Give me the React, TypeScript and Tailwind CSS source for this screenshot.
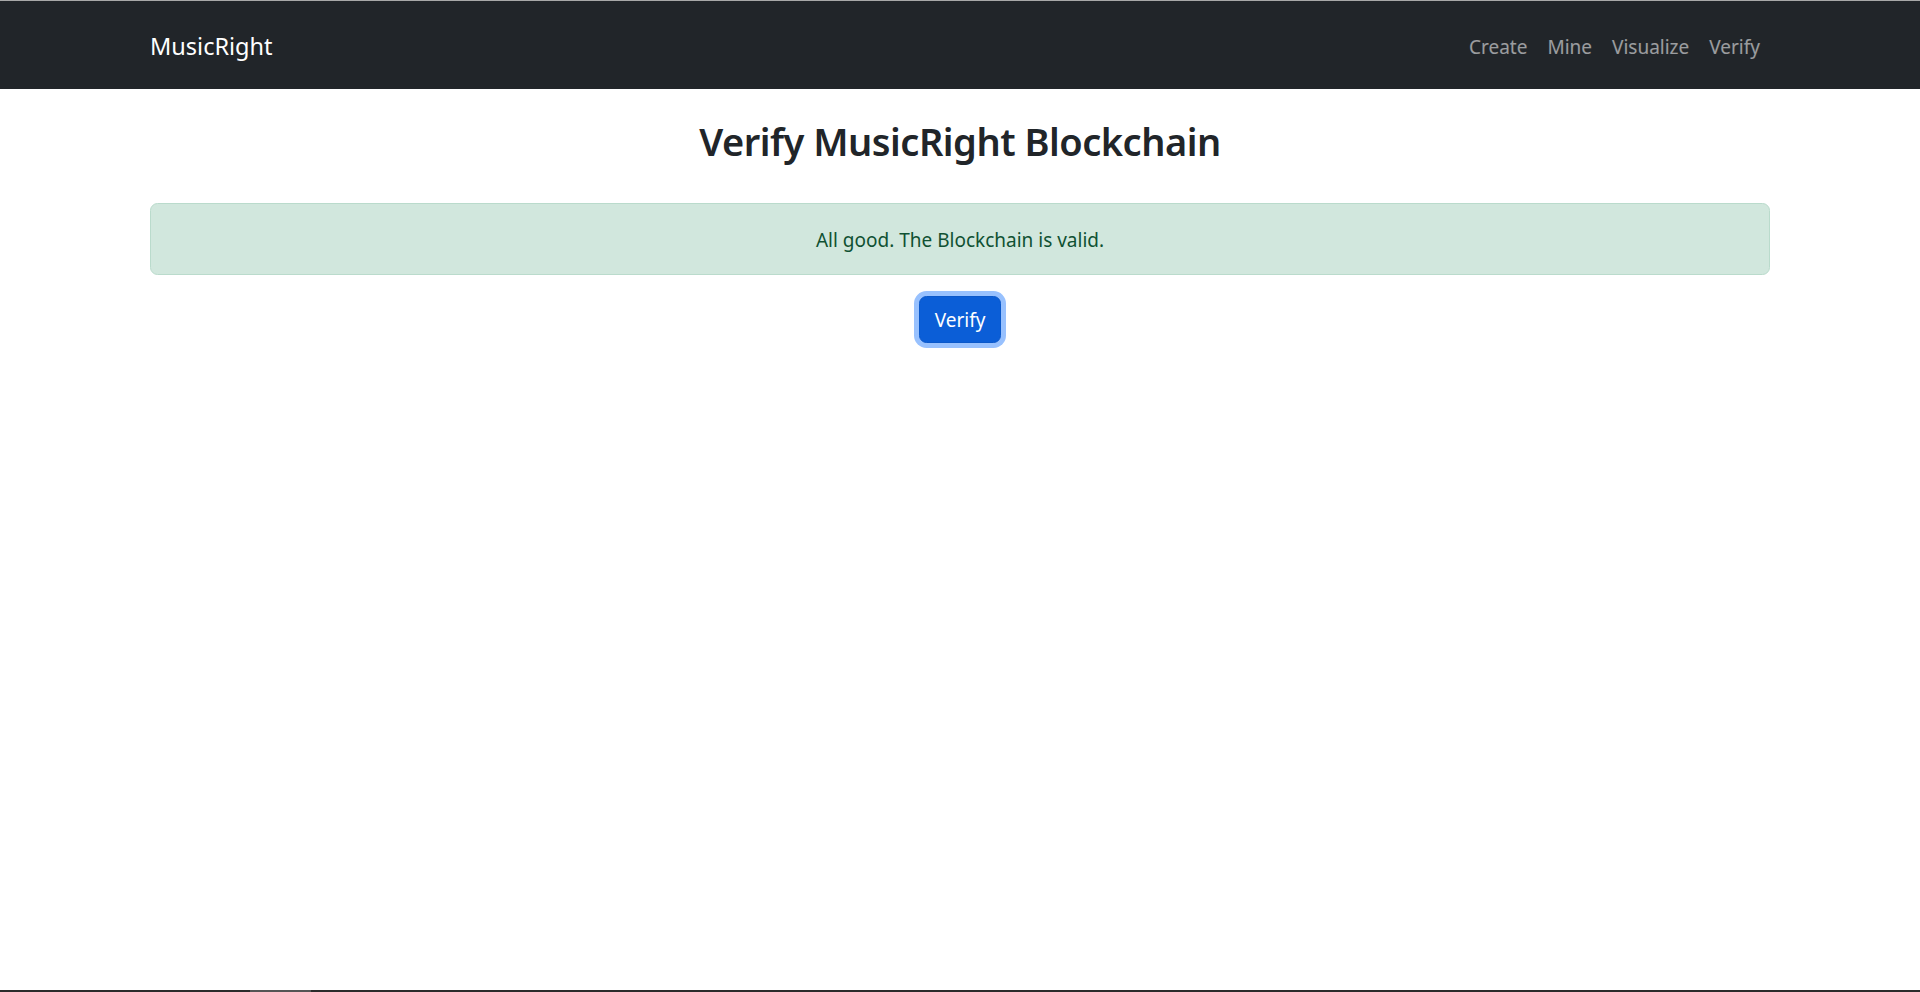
import { useState } from "react";

const links = ["Create", "Mine", "Visualize", "Verify"];

const App = () => {
  const [valid, setValid] = useState(true);

  return (
    <div className="min-h-screen flex flex-col bg-white font-['Noto_Sans','Open_Sans',sans-serif]">
      {/* thin window edge on top */}
      <div className="h-px bg-[#a8a8a8]" />

      <nav className="h-[88px] bg-[#212529]">
        <div className="w-[1620px] mx-auto h-full pt-[3px] flex items-center justify-between">
          <a className="text-[23.5px] leading-[37px] text-white cursor-pointer">MusicRight</a>
          <ul className="flex items-center">
            {links.map((l) => (
              <li key={l}>
                <a className="block px-[10px] text-[19px] leading-[30px] text-white/55 hover:text-white/75 cursor-pointer">
                  {l}
                </a>
              </li>
            ))}
          </ul>
        </div>
      </nav>

      <main className="w-[1620px] mx-auto flex flex-col">
        <h1 className="mt-[29px] text-center text-[38px] leading-[46px] font-semibold tracking-[-0.5px] text-[#212529]">
          Verify MusicRight Blockchain
        </h1>

        {valid && (
          <div className="mt-[39px] h-[72px] pt-px flex items-center justify-center rounded-[7.5px] border border-[#badbcc] bg-[#d1e7dd] text-[19px] leading-[30px] text-[#0f5132]">
            All good. The Blockchain is valid.
          </div>
        )}

        <div className="mt-[21px] flex justify-center">
          <button
            onClick={() => setValid(true)}
            className="px-[15px] py-[7.5px] text-[19px] leading-[30px] text-white bg-[#0b5ed7] border border-[#0a58ca] rounded-[7.5px] ring-[5px] ring-[#98c1fe]"
          >
            Verify
          </button>
        </div>
      </main>

      <div className="flex-1" />
      {/* bottom edge bar */}
      <div className="h-[2px] bg-[#2b2b2b] flex">
        <div className="w-[250px]" />
        <div className="w-[61px] bg-[#555555]" />
      </div>
    </div>
  );
};

export default App;
